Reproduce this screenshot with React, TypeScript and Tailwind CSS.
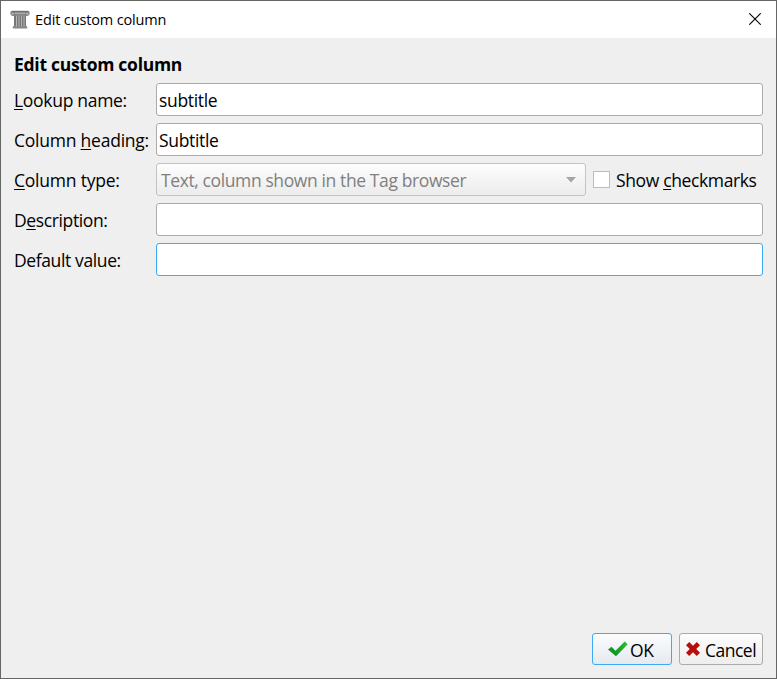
import type { ReactNode } from "react";

function ColumnIcon() {
  return (
    <svg width="20" height="20" viewBox="0 0 20 20" className="mr-[5px] shrink-0">
      <path d="M.3 3C.3 1.300 1.300.7 3 .7h14c1.700 0 2.700.6 2.700 2.300S18.500 6 17 6H3C1.500 6 .3 4.700.3 3Z" fill="#858585" />
      <path d="M2 1.700h16" stroke="#6a6a6a" strokeWidth="1" />
      <path d="M4.500 3.300h11" stroke="#b0b0b0" strokeWidth="1.200" />
      <circle cx="2.600" cy="3.800" r="1" fill="#bbb" />
      <circle cx="17.400" cy="3.800" r="1" fill="#bbb" />
      <path d="M4 5.500h12v11H4Z" fill="#767676" />
      <path d="M6.500 5.500v11M9 5.500v11M11.500 5.500v11M14 5.500v11" stroke="#b8b8b8" strokeWidth="1" />
      <path d="M2.800 16.200h14.400v2.300H2.800Z" fill="#868686" />
    </svg>
  );
}

function Label({ children, className = "" }: { children: ReactNode; className?: string }) {
  return <label className={`w-[142px] shrink-0 whitespace-nowrap ${className}`}>{children}</label>;
}

function Key({ children }: { children: ReactNode }) {
  return <span className="underline decoration-1 underline-offset-2">{children}</span>;
}

function Field({ value = "", focused = false }: { value?: string; focused?: boolean }) {
  return (
    <div className={`flex h-[33px] flex-1 items-center rounded-[3px] border bg-white px-[2px] ${focused ? "border-[#3daaf5]" : "border-[#ababab]"}`}>
      <span className="tracking-[-0.33px]">{value}</span>
    </div>
  );
}

export default function App() {
  return (
    <div className="flex h-[679px] w-[777px] flex-col border border-[#666] bg-[#efefef] font-['Open_Sans','Noto_Sans',sans-serif] text-[17.5px] leading-[24px] text-black">
      <header className="flex h-[37px] shrink-0 items-center bg-white pl-[9px] pr-[15px]">
        <ColumnIcon />
        <span className="flex-1 text-[14.5px] tracking-[-0.14px]">Edit custom column</span>
        <svg width="12" height="12" viewBox="0 0 12 12" className="mb-[1px] shrink-0">
          <path d="M.3.3l11.400 11.400M11.700.3L.3 11.700" stroke="#000" strokeWidth="1.100" />
        </svg>
      </header>
      <main className="flex flex-1 flex-col px-[13px] pb-[13px] pt-[14px]">
        <h1 className="h-[31px] font-bold tracking-[-0.28px]">Edit custom column</h1>
        <div className="flex flex-col gap-[7px]">
          <div className="flex h-[33px] items-center">
            <Label className="tracking-[-0.3px]"><Key>L</Key>ookup name:</Label>
            <Field value="subtitle" />
          </div>
          <div className="flex h-[33px] items-center">
            <Label className="tracking-[-0.23px]">Column <Key>h</Key>eading:</Label>
            <Field value="Subtitle" />
          </div>
          <div className="flex h-[33px] items-center">
            <Label className="tracking-[-0.22px]"><Key>C</Key>olumn type:</Label>
            <div className="flex h-[33px] w-[430px] items-center rounded-[3px] border border-[#c3c3c3] bg-linear-to-b from-[#fdfdfd] to-[#ececec] pl-[4px] pr-[9px] text-[#808080]">
              <span className="flex-1 tracking-[-0.39px]">Text, column shown in the Tag browser</span>
              <svg width="10" height="6" viewBox="0 0 10 6" className="shrink-0"><path d="M0 0h10L5 5.500Z" fill="#a5a5a5" /></svg>
            </div>
            <div className="ml-[7px] mr-[6px] h-[17px] w-[17px] border border-[#bcbcbc] bg-white" />
            <span className="whitespace-nowrap tracking-[-0.37px]">Show <Key>c</Key>heckmarks</span>
          </div>
          <div className="flex h-[33px] items-center">
            <Label className="tracking-[-0.38px]">D<Key>e</Key>scription:</Label>
            <Field />
          </div>
          <div className="flex h-[33px] items-center">
            <Label className="tracking-[-0.38px]">Default value:</Label>
            <Field focused />
          </div>
        </div>
        <footer className="mt-auto flex justify-end gap-[7px]">
          <button className="flex h-[32px] w-[80px] items-center rounded-[3px] border border-[#3daaf5] bg-linear-to-b from-[#fbfcfd] to-[#e5eaef] pl-[15px]">
            <svg width="20" height="16" viewBox="0 0 20 16" className="mr-[2px] shrink-0">
              <defs>
                <linearGradient id="check" x1="0" y1="1" x2="1" y2="0">
                  <stop offset="0" stopColor="#0b8426" />
                  <stop offset="1" stopColor="#27c62b" />
                </linearGradient>
              </defs>
              <path d="M0 8.400L3.500 5.800l4 4L16.700.6l3 2.700L8 15.300Z" fill="url(#check)" />
            </svg>
            <span className="pt-[1px] tracking-[-0.4px]">OK</span>
          </button>
          <button className="flex h-[32px] w-[84px] items-center rounded-[3px] border border-[#ababab] bg-linear-to-b from-[#fdfdfd] to-[#eee] pl-[6px]">
            <svg width="14" height="14" viewBox="0 0 14 14" className="mb-[1px] mr-[5px] shrink-0"><path d="M3.200 0L7 3.800 10.800 0 14 3.200 10.200 7 14 10.800 10.800 14 7 10.200 3.200 14 0 10.800 3.800 7 0 3.200Z" fill="#b90d0d" /></svg>
            <span className="pt-[1px] tracking-[-0.5px]">Cancel</span>
          </button>
        </footer>
      </main>
    </div>
  );
}
